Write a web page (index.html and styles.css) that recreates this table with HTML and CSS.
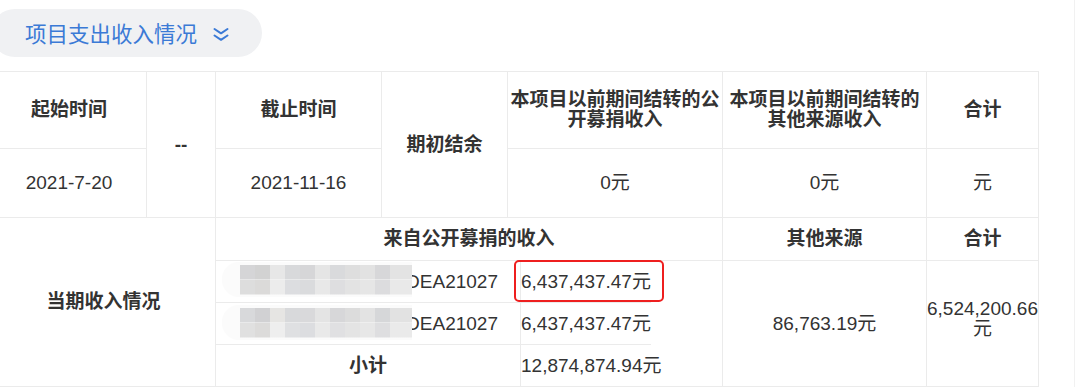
FILE: index.html
```html
<!DOCTYPE html>
<html lang="zh-CN">
<head>
<meta charset="utf-8">
<title>项目支出收入情况</title>
<link rel="stylesheet" href="styles.css">
</head>
<body>
<div class="wrap">
  <div class="pill">
    <span class="pill-title">项目支出收入情况</span>
    <svg class="chev" width="18" height="15" viewBox="0 0 18 15" aria-hidden="true">
      <polyline points="2.5,2 9,6.3 15.5,2" />
      <polyline points="2.5,8.5 9,12.8 15.5,8.5" />
    </svg>
  </div>

  <div class="grid">
    <div class="c h">起始时间</div>
    <div class="c h rs2">--</div>
    <div class="c h">截止时间</div>
    <div class="c h rs2">期初结余</div>
    <div class="c h">本项目以前期间结转的公开募捐收入</div>
    <div class="c h">本项目以前期间结转的其他来源收入</div>
    <div class="c h">合计</div>

    <div class="c">2021-7-20</div>
    <div class="c">2021-11-16</div>
    <div class="c">0元</div>
    <div class="c">0元</div>
    <div class="c">元</div>

    <div class="c h cs2 rs2">当期收入情况</div>
    <div class="c h cs3">来自公开募捐的收入</div>
    <div class="c h">其他来源</div>
    <div class="c h">合计</div>

    <div class="nest cs3">
      <div class="id"><span class="id-text">DEA21027</span><span class="mosaic"></span></div>
      <div class="amts">
        <div class="amt line mark">6,437,437.47元</div>
        <div class="amt line">6,437,437.47元</div>
        <div class="amt">12,874,874.94元</div>
      </div>
      <div class="id"><span class="id-text">DEA21027</span><span class="mosaic m2"></span></div>
      <div class="id sub">小计</div>
    </div>
    <div class="c">86,763.19元</div>
    <div class="c total">6,524,200.66元</div>
  </div>
</div>
</body>
</html>
```

FILE: styles.css
```css
html, body {
  margin: 0;
  padding: 0;
  background: #ffffff;
}

body {
  width: 1074px;
  height: 387px;
  border-right: 1px solid #f1f1f1;
  overflow: hidden;
  font-family: "Liberation Sans", "Noto Sans CJK SC", sans-serif;
  color: #333333;
}

.wrap {
  margin-left: -9px;
  display: flex;
  flex-direction: column;
  align-items: flex-start;
}

.pill {
  margin-top: 9px;
  height: 48px;
  width: 271px;
  box-sizing: border-box;
  padding-left: 34px;
  border-radius: 24px;
  background: #f0f1f3;
  display: flex;
  align-items: center;
  gap: 15px;
}

.pill-title {
  font-family: "Noto Sans CJK SC", sans-serif;
  font-size: 21.5px;
  line-height: 26px;
  color: #3b7ad6;
}

.chev {
  margin-top: 2px;
}

.chev polyline {
  fill: none;
  stroke: #3b7ad6;
  stroke-width: 2;
  stroke-linecap: round;
  stroke-linejoin: round;
}

.grid {
  margin-top: 14px;
  display: grid;
  grid-template-columns: 154px 68px 165px 125px 214px 203px 111px;
  grid-template-rows: 76px 68px 42px 125px;
  gap: 1px;
  padding: 1px;
  background: #ebebeb;
}

.c {
  background: #ffffff;
  display: flex;
  align-items: center;
  justify-content: center;
  text-align: center;
  font-size: 19px;
  line-height: 20px;
  padding: 0 2px;
}

.h {
  font-weight: 700;
}

.rs2 { grid-row: span 2; }
.cs2 { grid-column: span 2; }
.cs3 { grid-column: span 3; }

.total {
  padding: 0;
  padding-bottom: 10px;
  box-sizing: border-box;
}

.nest {
  display: grid;
  grid-template-columns: 304px 201px;
  grid-template-rows: 41px 41px 41px;
  gap: 1px;
  background: #ebebeb;
  font-size: 19px;
}

.id {
  background: #ffffff;
  position: relative;
  display: flex;
  align-items: center;
  justify-content: flex-end;
  padding-right: 22px;
  line-height: 41px;
}

.id.sub {
  justify-content: center;
  padding-right: 0;
  font-weight: 700;
}

.mosaic {
  position: absolute;
  left: 6px;
  top: 1px;
  width: 190px;
  height: 35px;
  border-radius: 17px 0 0 17px;
  background-color: #fbfbfb;
  background-image:
    linear-gradient(90deg,
      #d5d5d7 0 15px, #d2d2d2 15px 30px, #e7e7e7 30px 45px, #d8d9db 45px 60px,
      #d6d6d8 60px 75px, #e5e5e5 75px 90px, #d9dadc 90px 105px, #dedede 105px 120px,
      #e2e2e2 120px 135px, #d7d7d9 135px 150px, #e3e3e3 150px 172px),
    linear-gradient(90deg,
      #dddddd 0 15px, #dbdad9 15px 30px, #ececec 30px 45px, #dcdde0 45px 60px,
      #dadbdd 60px 75px, #e8e8e8 75px 90px, #dedee0 90px 105px, #e3e3e3 105px 120px,
      #e6e6e6 120px 135px, #dcdcde 135px 150px, #e9e9e9 150px 172px);
  background-size: 172px 14.5px, 172px 14.5px;
  background-position: 18px 3px, 18px 17.5px;
  background-repeat: no-repeat;
}

.mosaic.m2 {
  top: 2px;
  background-image:
    linear-gradient(90deg,
      #d8d9db 0 15px, #d1d1d3 15px 30px, #e6e5e3 30px 45px, #d8d9db 45px 60px,
      #d9d9db 60px 75px, #e4e4e4 75px 90px, #d7d7d9 90px 105px, #dcdcdc 105px 120px,
      #e3e3e3 120px 135px, #d6d7d9 135px 150px, #e2e2e2 150px 172px),
    linear-gradient(90deg,
      #e0e0e0 0 15px, #dcdbda 15px 30px, #eeeeee 30px 45px, #dfe0e2 45px 60px,
      #dcdde0 60px 75px, #e9e9e9 75px 90px, #e0e0e2 90px 105px, #e4e4e4 105px 120px,
      #e7e7e7 120px 135px, #dedee0 135px 150px, #eaeaea 150px 172px);
}

.amts {
  grid-row: 1 / 4;
  grid-column: 2;
  background: #ffffff;
  display: flex;
  flex-direction: column;
}

.amt {
  width: 130px;
  height: 41px;
  line-height: 41px;
  white-space: nowrap;
  position: relative;
}

.amt.line {
  border-bottom: 1px solid #ebebeb;
}

.amt.mark::after {
  content: "";
  position: absolute;
  left: -7px;
  top: -1px;
  width: 150px;
  height: 42px;
  box-sizing: border-box;
  border: 2px solid #ee1f1f;
  border-radius: 5px;
}
```
